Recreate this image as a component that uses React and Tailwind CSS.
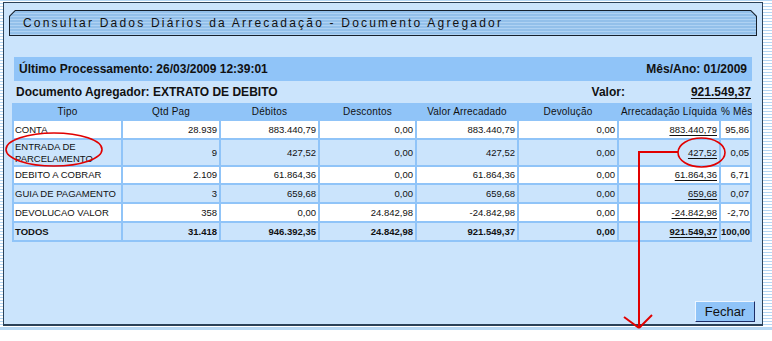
import React from 'react';

// ── Data ───────────────────────────────────────────────────────────
const HEADERS = ['Tipo', 'Qtd Pag', 'Débitos', 'Descontos', 'Valor Arrecadado', 'Devolução', 'Arrecadação Líquida', '% Mês'];
const WIDTHS = ['w-[107px]', 'w-[96px]', 'w-[97px]', 'w-[95px]', 'w-[100px]', 'w-[98px]', 'w-[100px]', 'w-[29px]'];

const ROWS = [
  { tipo: 'CONTA', vals: ['28.939', '883.440,79', '0,00', '883.440,79', '0,00', '883.440,79', '95,86'], bg: 'bg-white', h: 'h-[17px]' },
  { tipo: 'ENTRADA DE PARCELAMENTO', vals: ['9', '427,52', '0,00', '427,52', '0,00', '427,52', '0,05'], bg: 'bg-[#cbe4fc]', h: 'h-[25px]' },
  { tipo: 'DEBITO A COBRAR', vals: ['2.109', '61.864,36', '0,00', '61.864,36', '0,00', '61.864,36', '6,71'], bg: 'bg-white', h: 'h-[16px]' },
  { tipo: 'GUIA DE PAGAMENTO', vals: ['3', '659,68', '0,00', '659,68', '0,00', '659,68', '0,07'], bg: 'bg-[#cbe4fc]', h: 'h-[17px]' },
  { tipo: 'DEVOLUCAO VALOR', vals: ['358', '0,00', '24.842,98', '-24.842,98', '0,00', '-24.842,98', '-2,70'], bg: 'bg-white', h: 'h-[17px]' },
  { tipo: 'TODOS', vals: ['31.418', '946.392,35', '24.842,98', '921.549,37', '0,00', '921.549,37', '100,00'], bg: 'bg-[#cbe4fc]', h: 'h-[17px]', bold: true },
];

const FONT = "font-['Liberation_Sans',Arial,sans-serif]";

// ── Title bar ──────────────────────────────────────────────────────
function TitleBar() {
  return (
    <div className="mx-[5px] mt-[7px] h-[26px] bg-[#16202c] p-px [clip-path:polygon(6px_0,calc(100%-6px)_0,100%_6px,100%_100%,0_100%,0_6px)]">
      <div className="h-full flex items-center pl-[13px] bg-[repeating-linear-gradient(180deg,#93c0ea_0px,#93c0ea_2px,#afd2f3_2px,#afd2f3_3px)] [clip-path:polygon(5.5px_0,calc(100%-5.5px)_0,100%_5.5px,100%_100%,0_100%,0_5.5px)]">
        <span className="text-[12px] tracking-[2.2px] text-[#111]">
          Consultar Dados Diários da Arrecadação - Documento Agregador
        </span>
      </div>
    </div>
  );
}

// ── Table ──────────────────────────────────────────────────────────
function DataTable() {
  return (
    <div className="ml-[8px] w-[740px] overflow-hidden">
      <table className="table-fixed w-[740px] border-separate border-spacing-[2px] bg-[#90c4f8] text-[#111]">
        <colgroup>
          {WIDTHS.map((w, i) => <col key={i} className={w} />)}
        </colgroup>
        <thead>
          <tr>
            {HEADERS.map(h => (
              <th key={h} className="h-[14px] p-0 text-center font-normal text-[10px] tracking-[0.2px] whitespace-nowrap leading-[14px]">{h}</th>
            ))}
          </tr>
        </thead>
        <tbody>
          {ROWS.map(r => (
            <tr key={r.tipo} className={`${r.bg} ${r.bold ? 'font-bold' : ''}`}>
              <td className={`${r.h} p-0 pl-[1px] text-[9.5px] leading-[12px] text-left align-middle`}>
                {r.tipo}
              </td>
              {r.vals.map((v, i) => (
                <td key={i} className={`p-0 ${i === 6 ? 'pr-px' : 'pr-[2px]'} text-[9.5px] text-right align-middle leading-[12px] whitespace-nowrap`}>
                  <span className={i === 5 ? 'underline underline-offset-[2px]' : ''}>{v}</span>
                </td>
              ))}
            </tr>
          ))}
        </tbody>
      </table>
    </div>
  );
}

// ── Red annotations ────────────────────────────────────────────────
function Annotations() {
  return (
    <svg className="absolute left-0 top-0 pointer-events-none" width="772" height="341" viewBox="0 0 772 341">
      <g fill="none" stroke="#e10000" strokeWidth="1.6">
        <ellipse cx="54" cy="149.5" rx="48" ry="16.5" />
        <ellipse cx="701.5" cy="152.5" rx="23.5" ry="14.5" />
      </g>
      <g fill="none" stroke="#e10000" strokeWidth="2">
        <polyline points="678,152 639,152 639,328" />
        <line x1="624" y1="317" x2="639" y2="328" />
        <line x1="652" y1="315" x2="639" y2="328" />
      </g>
    </svg>
  );
}

// ── Page ───────────────────────────────────────────────────────────
export default function App() {
  return (
    <div className={`relative w-[772px] h-[341px] bg-white overflow-hidden ${FONT}`}>
      <div className="h-[328px] pt-[2px] pl-[3px] bg-[repeating-linear-gradient(180deg,#b4d6f4_0px,#b4d6f4_1px,#ffffff_1px,#ffffff_3px)]">
        <div className="w-[760px] h-[324px] bg-[#cbe4fc] border border-[#2b4158] border-b-2 flex flex-col">
          <TitleBar />

          <div className="mt-[21px] mx-[10px] h-[24px] bg-[#90c4f8] flex items-center justify-between px-[5px] text-[12px] font-bold text-[#111]">
            <span>Último Processamento: 26/03/2009 12:39:01</span>
            <span>Mês/Ano: 01/2009</span>
          </div>

          <div className="mx-[10px] h-[22px] flex items-center pl-[2px] text-[12px] font-bold text-[#111]">
            <span>Documento Agregador: EXTRATO DE DEBITO</span>
            <span className="ml-auto">Valor:</span>
            <span className="ml-[66px] mr-[1px] underline underline-offset-[2px]">921.549,37</span>
          </div>

          <DataTable />

          <div className="flex justify-end mr-[7px] mt-auto mb-[2px]">
            <button className="w-[60px] h-[21px] bg-[#90c4f8] border border-t-[#eef6ff] border-l-[#eef6ff] border-b-[#1c2c66] border-r-[#1c2c66] text-[13px] text-[#111] leading-none">
              Fechar
            </button>
          </div>
        </div>
      </div>
      <div className="h-[2px] bg-[#b8d9f5]" />
      <Annotations />
    </div>
  );
}
